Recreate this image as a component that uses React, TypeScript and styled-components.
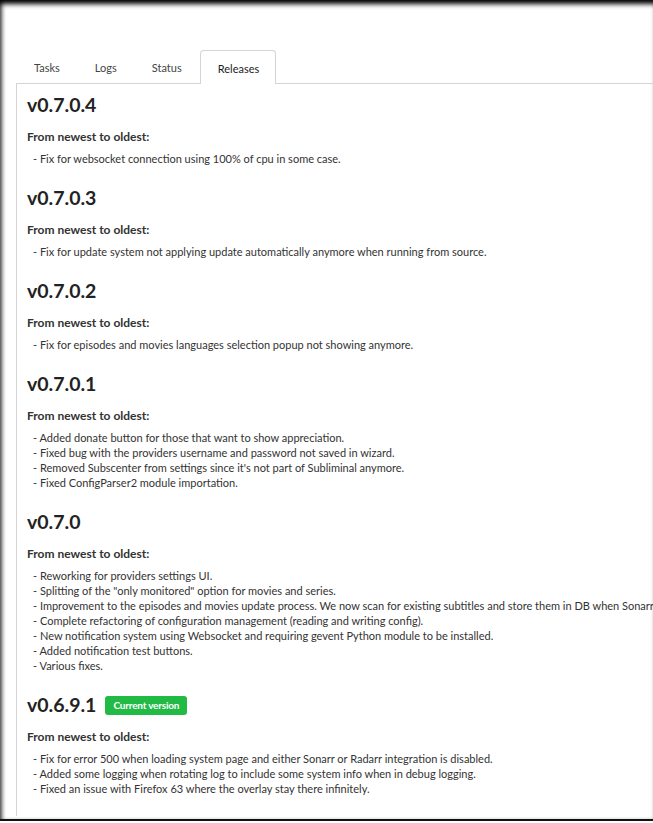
import styled, { createGlobalStyle } from 'styled-components';

const GlobalStyle = createGlobalStyle`
  html, body {
    margin: 0;
    padding: 0;
    overflow: hidden;
    background: #fff;
  }
  body {
    font-family: Lato, "Open Sans", sans-serif;
    color: #333;
  }
`;

const Frame = styled.div`
  position: relative;
  height: 821px;
  border-bottom: 2px solid #111;
  box-shadow: inset 0 7px 5px -3px #000, inset 4px 0 4px -2px #444;
  padding: 50px 0 0 16px;
  box-sizing: border-box;
  overflow: hidden;
`;

const TabMenu = styled.div`
  display: flex;
  height: 33px;
  border-bottom: 1px solid #d4d4d5;
  width: 1000px;
`;

const TabItem = styled.div<{ $active?: boolean }>`
  display: flex;
  align-items: center;
  padding: 1px 16px 0 17px;
  font-size: 11px;
  color: ${(p) => (p.$active ? '#1b1c1d' : '#444')};
  border: 1px solid ${(p) => (p.$active ? '#d4d4d5' : 'transparent')};
  border-bottom: none;
  border-radius: 4px 4px 0 0;
  background: #fff;
  margin-bottom: ${(p) => (p.$active ? '-1px' : '0')};
  margin-left: ${(p) => (p.$active ? '1px' : '0')};
`;

const Panel = styled.div`
  width: 1000px;
  border-left: 1px solid #d4d4d5;
  padding: 9px 11px 0 10px;
  white-space: nowrap;
`;

const Release = styled.section`
  padding-bottom: 20px;
`;

const TitleRow = styled.div`
  display: flex;
  align-items: center;
  gap: 9px;
`;

const Version = styled.h2`
  margin: 0;
  font-size: 19.5px;
  line-height: 24px;
  font-weight: 700;
  color: #222;
`;

const Badge = styled.span`
  display: inline-flex;
  align-items: center;
  height: 19px;
  padding: 0 8px;
  border-radius: 3px;
  background: #21ba45;
  color: #fff;
  font-size: 10px;
  font-weight: 700;
  letter-spacing: -0.2px;
`;

const Subtitle = styled.div`
  margin-top: 12px;
  font-size: 12px;
  line-height: 15px;
  font-weight: 700;
  color: #333;
`;

const Notes = styled.ul`
  list-style: none;
  margin: 7px 0 0;
  padding: 0 0 0 6px;
  font-size: 11px;
  line-height: 15px;
  color: #333;
`;

type ReleaseInfo = { version: string; current?: boolean; notes: string[] };

const releases: ReleaseInfo[] = [
  {
    version: 'v0.7.0.4',
    notes: ['Fix for websocket connection using 100% of cpu in some case.'],
  },
  {
    version: 'v0.7.0.3',
    notes: ['Fix for update system not applying update automatically anymore when running from source.'],
  },
  {
    version: 'v0.7.0.2',
    notes: ['Fix for episodes and movies languages selection popup not showing anymore.'],
  },
  {
    version: 'v0.7.0.1',
    notes: [
      'Added donate button for those that want to show appreciation.',
      'Fixed bug with the providers username and password not saved in wizard.',
      "Removed Subscenter from settings since it's not part of Subliminal anymore.",
      'Fixed ConfigParser2 module importation.',
    ],
  },
  {
    version: 'v0.7.0',
    notes: [
      'Reworking for providers settings UI.',
      'Splitting of the "only monitored" option for movies and series.',
      'Improvement to the episodes and movies update process. We now scan for existing subtitles and store them in DB when Sonarr or Radarr sync.',
      'Complete refactoring of configuration management (reading and writing config).',
      'New notification system using Websocket and requiring gevent Python module to be installed.',
      'Added notification test buttons.',
      'Various fixes.',
    ],
  },
  {
    version: 'v0.6.9.1',
    current: true,
    notes: [
      'Fix for error 500 when loading system page and either Sonarr or Radarr integration is disabled.',
      'Added some logging when rotating log to include some system info when in debug logging.',
      'Fixed an issue with Firefox 63 where the overlay stay there infinitely.',
    ],
  },
];

const tabs = ['Tasks', 'Logs', 'Status', 'Releases'];

export default function App() {
  return (
    <>
      <GlobalStyle />
      <Frame>
        <TabMenu>
          {tabs.map((t) => (
            <TabItem key={t} $active={t === 'Releases'}>
              {t}
            </TabItem>
          ))}
        </TabMenu>
        <Panel>
          {releases.map((r) => (
            <Release key={r.version}>
              <TitleRow>
                <Version>{r.version}</Version>
                {r.current && <Badge>Current version</Badge>}
              </TitleRow>
              <Subtitle>From newest to oldest:</Subtitle>
              <Notes>
                {r.notes.map((n) => (
                  <li key={n}>- {n}</li>
                ))}
              </Notes>
            </Release>
          ))}
        </Panel>
      </Frame>
    </>
  );
}
